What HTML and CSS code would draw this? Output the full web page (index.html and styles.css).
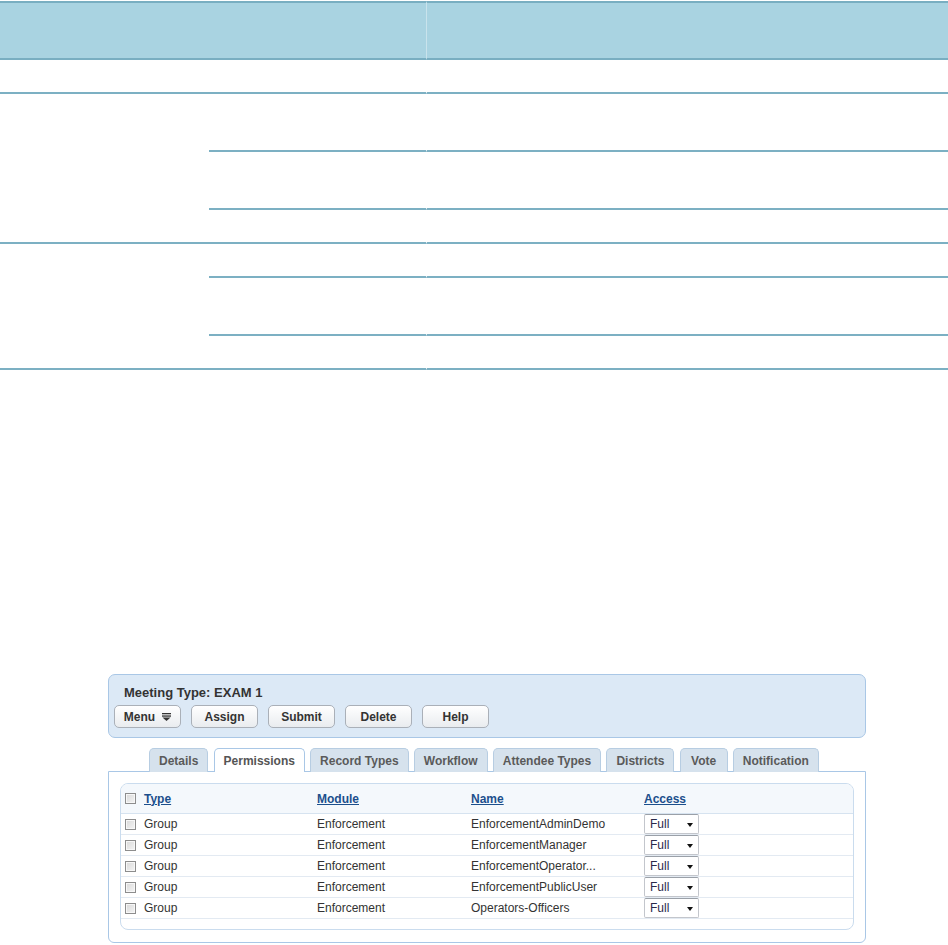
FILE: index.html
```html
<!DOCTYPE html>
<html>
<head>
<meta charset="utf-8">
<link rel="stylesheet" href="styles.css">
</head>
<body>
<div class="grid">
  <div class="hd hd-a"></div>
  <div class="hd hd-b c3"></div>

  <div class="cell r2 c1"></div>
  <div class="cell r2 c2"></div>
  <div class="cell r2 c3"></div>

  <div class="cell g1 c1"></div>
  <div class="cell r3 c2"></div>
  <div class="cell r3 c3"></div>
  <div class="cell r4 c2"></div>
  <div class="cell r4 c3"></div>
  <div class="cell r5 c2"></div>
  <div class="cell r5 c3"></div>

  <div class="cell g2 c1"></div>
  <div class="cell r6 c2"></div>
  <div class="cell r6 c3"></div>
  <div class="cell r7 c2"></div>
  <div class="cell r7 c3"></div>
  <div class="cell r8 c2"></div>
  <div class="cell r8 c3"></div>
</div>

<div class="shot">
  <div class="panel">
    <div class="title">Meeting Type: EXAM 1</div>
    <div class="buttons">
      <div class="btn">Menu <svg class="menu-ic" width="9" height="8" viewBox="0 0 9 8"><rect x="0" y="0" width="9" height="1.3" fill="#333"/><rect x="0" y="2.4" width="9" height="1.3" fill="#333"/><path d="M0.5 4.6 H8.5 L4.5 8 Z" fill="#333"/></svg></div>
      <div class="btn">Assign</div>
      <div class="btn">Submit</div>
      <div class="btn">Delete</div>
      <div class="btn">Help</div>
    </div>
  </div>

  <div class="tabs">
    <div class="tab">Details</div>
    <div class="tab active">Permissions</div>
    <div class="tab">Record Types</div>
    <div class="tab">Workflow</div>
    <div class="tab">Attendee Types</div>
    <div class="tab">Districts</div>
    <div class="tab tab-short">Vote</div>
    <div class="tab">Notification</div>
  </div>

  <div class="content">
    <div class="inner">
      <div class="row head">
        <span class="cb"></span>
        <a class="lnk">Type</a>
        <a class="lnk">Module</a>
        <a class="lnk">Name</a>
        <a class="lnk">Access</a>
      </div>
      <div class="row">
        <span class="cb"></span><span>Group</span><span>Enforcement</span><span>EnforcementAdminDemo</span>
        <span class="sel">Full<i class="arr"></i></span>
      </div>
      <div class="row">
        <span class="cb"></span><span>Group</span><span>Enforcement</span><span>EnforcementManager</span>
        <span class="sel">Full<i class="arr"></i></span>
      </div>
      <div class="row">
        <span class="cb"></span><span>Group</span><span>Enforcement</span><span>EnforcementOperator...</span>
        <span class="sel">Full<i class="arr"></i></span>
      </div>
      <div class="row">
        <span class="cb"></span><span>Group</span><span>Enforcement</span><span>EnforcementPublicUser</span>
        <span class="sel">Full<i class="arr"></i></span>
      </div>
      <div class="row">
        <span class="cb"></span><span>Group</span><span>Enforcement</span><span>Operators-Officers</span>
        <span class="sel">Full<i class="arr"></i></span>
      </div>
      <div class="tail"></div>
    </div>
  </div>
</div>
</body>
</html>
```

FILE: styles.css
```css
* { box-sizing: border-box; }
html, body { margin: 0; padding: 0; background: #fff; }
body { font-family: "Liberation Sans", Arial, sans-serif; font-size: 12px; color: #333; }

.grid {
  margin-top: 1px;
  display: grid;
  grid-template-columns: 209px 217px 1fr;
  grid-template-rows: 59px 34px 58px 58px 34px 34px 58px 34px;
}
.hd {
  background: #a9d3e1;
  border-top: 2px solid #79aec1;
  border-bottom: 2px solid #79aec1;
}
.hd-a { grid-column: 1 / 3; grid-row: 1; }
.hd-b { grid-row: 1; }
.cell { border-bottom: 2px solid #7cb0c3; }
.c1 { grid-column: 1; }
.c2 { grid-column: 2; }
.c3 { grid-column: 3; border-left: 1px solid #fff; }
.hd.c3 { border-left-color: #c9e3ec; }
.r2 { grid-row: 2; }
.r3 { grid-row: 3; }
.r4 { grid-row: 4; }
.r5 { grid-row: 5; }
.r6 { grid-row: 6; }
.r7 { grid-row: 7; }
.r8 { grid-row: 8; }
.g1 { grid-row: 3 / 6; }
.g2 { grid-row: 6 / 9; }

.shot {
  margin: 304px 0 0 108px;
  width: 758px;
}
.panel {
  height: 64px;
  background: #dce9f6;
  border: 1px solid #a9c7e6;
  border-radius: 7px;
  padding: 10px 5px 0 5px;
}
.title {
  font-size: 13px;
  font-weight: bold;
  line-height: 15px;
  padding-left: 10px;
  color: #333;
}
.buttons {
  display: flex;
  gap: 10px;
  margin-top: 5px;
}
.btn {
  width: 67px;
  height: 23px;
  border: 1px solid #aab0b8;
  border-radius: 5px;
  background: linear-gradient(#ffffff, #e9ecef);
  font-weight: bold;
  font-size: 12px;
  color: #333;
  display: flex;
  align-items: center;
  justify-content: center;
  gap: 7px;
}
.menu-ic { display: block; }

.tabs {
  display: flex;
  gap: 5.2px;
  margin-top: 10px;
  padding-left: 41px;
  position: relative;
  z-index: 1;
}
.tab {
  height: 24px;
  margin-bottom: -1px;
  padding: 0 9px;
  background: #d6e2ed;
  border: 1px solid #b7cde2;
  border-bottom: none;
  border-radius: 5px 5px 0 0;
  font-weight: bold;
  color: #5a5a5a;
  line-height: 24px;
  text-align: center;
}
.tab-short { min-width: 48px; }
.tab.active {
  background: #fff;
  border-color: #a9c7e6;
  color: #555;
}

.content {
  height: 172px;
  border: 1px solid #a9c7e6;
  border-radius: 0 0 6px 6px;
  padding: 11px 11px 0 11px;
  background: #fff;
}
.inner {
  border: 1px solid #cadcee;
  border-radius: 8px;
  overflow: hidden;
  height: 147px;
}
.row {
  display: grid;
  grid-template-columns: 19px 173px 154px 173px 1fr;
  align-items: center;
  padding-left: 4px;
  height: 21px;
  border-bottom: 1px solid #e3eaf2;
}
.row.head {
  height: 30px;
  background: #f4f8fc;
  border-bottom: 1px solid #d6e3f0;
}
.lnk {
  font-weight: bold;
  color: #1c4f8c;
  text-decoration: underline;
}
.cb {
  width: 11px;
  height: 11px;
  border: 1px solid #8d8d8d;
  background: linear-gradient(135deg, #d9d9d9, #f4f4f4);
  box-shadow: inset 0 0 0 1px #f7f7f7;
}
.sel {
  width: 55px;
  height: 20px;
  align-self: start;
  border: 1px solid #c3c6cc;
  border-top-color: #9aa0a8;
  border-radius: 2px;
  padding-left: 5px;
  line-height: 19px;
  color: #2a2a4a;
  position: relative;
  background: #fff;
}
.arr {
  position: absolute;
  right: 5px;
  top: 8px;
  width: 0;
  height: 0;
  border-left: 3.5px solid transparent;
  border-right: 3.5px solid transparent;
  border-top: 4px solid #111;
}
.tail { height: 9px; }
```
